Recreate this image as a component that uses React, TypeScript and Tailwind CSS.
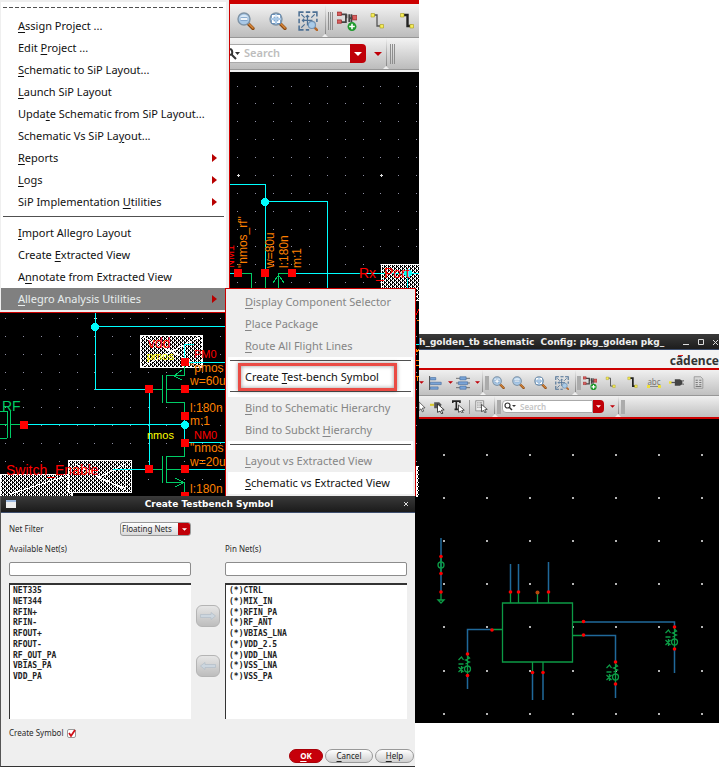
import React from "react";

const UI = "font-['Noto_Sans',sans-serif]";

/* ---------- shared helpers ---------- */

/** Renders a label whose mnemonic letter is marked with "&". */
function Mnemonic({ text }: { text: string }) {
  const i = text.indexOf("&");
  if (i < 0) return <>{text}</>;
  return (
    <span>
      {text.slice(0, i)}
      <span className="underline decoration-1 underline-offset-2">{text[i + 1]}</span>
      {text.slice(i + 2)}
    </span>
  );
}

function Caret({ className }: { className: string }) {
  return (
    <svg viewBox="0 0 8 4" className={className} aria-hidden="true">
      <path d="M0 0H8L4 4Z" fill="currentColor" />
    </svg>
  );
}

/* ---------- toolbar icons (18 x 18 grid) ---------- */

function Lens({ mark }: { mark: string }) {
  return (
    <>
      <path d="M11 11.5L16 16.5" stroke="#8a4a12" strokeWidth="3.2" strokeLinecap="round" />
      <path d="M11.5 11.5L16 16" stroke="#d8863a" strokeWidth="1.6" strokeLinecap="round" />
      <circle cx="7" cy="7" r="6" fill="#a9c8e6" stroke="#7e93a6" strokeWidth="1.4" />
      <path d="M2.6 6A4.6 4.6 0 0 1 11.4 6Q7 4.5 2.6 6Z" fill="#d8e8f6" />
      <path d={mark} stroke="#5c87b4" strokeWidth="3" />
      <path d={mark} stroke="#fff" strokeWidth="1.8" />
    </>
  );
}

const glyphs: Record<string, React.ReactNode> = {
  zoomIn: <Lens mark="M7 3.5V10.5M3.5 7H10.5" />,
  zoomOut: <Lens mark="M3.5 7H10.5" />,
  zoomFit: <Lens mark="M3.8 6V3.800H6M8 3.800H10.200V6M10.200 8V10.200H8M6 10.200H3.800V8" />,
  zoomRegion: (
    <>
      <path d="M1 5V1H5M7 1H11M13 1H17V5M1 7V11M1 13V17H5M7 17H10M17 7V10" stroke="#4d7094" strokeWidth="1.4" />
      <path d="M3 3L6 6M15 3L12 6M3 15L6 12M8.500 4V13M4 8.500H13M7 5.500L8.500 4L10 5.500M5.500 7L4 8.500L5.500 10" stroke="#4d7094" strokeWidth="1.1" />
      <path d="M14.500 14.500L18 18" stroke="#b7682a" strokeWidth="2.2" />
      <circle cx="12.500" cy="12.500" r="3.200" fill="#a9cbe8" stroke="#7393b3" />
    </>
  ),
  instance: (
    <>
      <path d="M3 3H8V10H3M11 3V10M8.500 6.500V3M11 6.500H16M13 3V10" stroke="#444" strokeWidth="1.6" />
      <path d="M0 1H4V4H0ZM0 8H4V11H0ZM14 4H18V8H14Z" fill="#d96060" stroke="#9c2c2c" strokeWidth="0.7" />
      <circle cx="13.500" cy="14" r="4" fill="#1e9a2c" />
      <path d="M13.500 11.500V16.500M11 14H16" stroke="#fff" strokeWidth="1.400" />
    </>
  ),
  wire: (
    <>
      <path d="M5 3H9V14H14" stroke="#555" strokeWidth="1.300" />
      <path d="M3 1.500H6.500V5H3ZM12 12.500H15.500V16H12Z" fill="#f4ec58" stroke="#a89a1c" strokeWidth="0.600" />
    </>
  ),
  wideWire: (
    <>
      <path d="M5 3H9.500V14H14" stroke="#222" strokeWidth="2.400" />
      <path d="M2.500 1.500H6V5H2.500ZM12 12.500H15.500V16H12Z" fill="#f4ec58" stroke="#a89a1c" strokeWidth="0.600" />
    </>
  ),
  pin: (
    <>
      <path d="M2 9H8" stroke="#555" strokeWidth="1.500" />
      <path d="M7 5H13L16 7V11L13 13H7Z" fill="#444" />
      <path d="M16 7H18M16 11H18" stroke="#444" />
      <path d="M0 7.500H3V10.500H0Z" fill="#eedf3e" />
    </>
  ),
  doc: (
    <>
      <path d="M3 1H12L15 4V17H3Z" fill="#d6d6d6" stroke="#888" />
      <path d="M5 6H8M10 6H13M5 9H8M10 9H13M5 12H8M10 12H13M5 14.500H13" stroke="#777" strokeWidth="1.400" />
    </>
  ),
  align: (
    <>
      <path d="M2 0V18" stroke="#555" strokeWidth="1.400" />
      <path d="M3 2H10V5H3ZM3 8H17V11H3ZM3 14H13V17H3Z" fill="#79a4d8" stroke="#466c9c" strokeWidth="0.800" />
    </>
  ),
  distribute: (
    <>
      <path d="M0 3H18M0 9H18M0 15H18" stroke="#555" />
      <path d="M5 1H13V5H5ZM3 7.500H15V11H3ZM5 13H13V17H5Z" fill="#79a4d8" stroke="#466c9c" strokeWidth="0.800" />
    </>
  ),
  pointer: <path d="M6 2L15 11L11 11.500L13 16L11 17L9 12.500L6 15Z" fill="#fff" stroke="#222" />,
  pickPin: (
    <>
      <path d="M0 7H5" stroke="#d8ca2c" strokeWidth="2.500" />
      <path d="M5 4H11L14 7L11 11H5Z" fill="#555" />
      <path d="M9 6L17 13L13.500 13.500L15.500 17L14 18L12 14.500L9 16Z" fill="#fff" stroke="#222" />
    </>
  ),
  pickText: (
    <>
      <path d="M1 4V1.500H11V4M6 1.500V13M3.500 13H8.500" stroke="#222" strokeWidth="2.200" />
      <path d="M9 7L17 14L13.500 14.500L15.500 17.500L14 18L12 15.500L9 17Z" fill="#fff" stroke="#222" />
    </>
  ),
  pickList: (
    <>
      <path d="M1 1H12V15H1Z" fill="#eee" stroke="#777" />
      <path d="M3 4H5M6 4H10M3 7H5M6 7H10M3 10H5M6 10H10" stroke="#777" strokeWidth="1.200" />
      <path d="M9 6L17 13L13.500 13.500L15.500 17L14 18L12 14.500L9 16Z" fill="#fff" stroke="#222" />
    </>
  ),
};

function ToolButton({ icon, label, box, size }: { icon: string; label: string; box: string; size: string }) {
  return (
    <button type="button" aria-label={label} className={`flex shrink-0 items-center justify-center ${box}`}>
      <svg viewBox="0 0 18 18" fill="none" className={size}>
        {glyphs[icon]}
      </svg>
    </button>
  );
}

/** Grip of a tool group, made of three fine bars. */
function Grip({ className }: { className: string }) {
  return (
    <span className={`flex shrink-0 justify-between ${className}`}>
      <span className="w-px bg-[#8e8e8e]" />
      <span className="w-px bg-[#8e8e8e]" />
      <span className="w-px bg-[#8e8e8e]" />
    </span>
  );
}

function Handle({ className }: { className: string }) {
  return <span className={`shrink-0 bg-[#ababab] ${className}`} />;
}

/** Small notch that closes a tool group at the toolbar's lower edge. */
function Notch({ className }: { className: string }) {
  return (
    <span className={`flex shrink-0 flex-col items-center self-stretch ${className}`}>
      <span className="w-px grow bg-linear-to-b from-transparent to-[#8a8a8a]" />
      <svg viewBox="0 0 6 3" className="h-[3px] w-[6px]">
        <path d="M0 3L3 0L6 3Z" fill="#efefef" />
      </svg>
    </span>
  );
}

/* ---------- left schematic ---------- */

const minorX = Array.from({ length: 24 }, (_, i) => Math.round(5 + i * 17.875));
const minorY = Array.from({ length: 24 }, (_, i) => Math.round(85.6 + i * 17.875));
const bigPins = [
  [238, 273], [265, 273], [292, 273], [185, 362], [149, 389], [185, 389], [185, 416],
  [185, 443], [149, 469], [185, 469], [185, 496], [24, 425],
];

function LeftCanvas() {
  return (
    <svg viewBox="0 72 419 425" className="block w-full bg-black font-['Liberation_Sans',sans-serif]" fill="none" shapeRendering="crispEdges">
      <defs>
        <pattern id="dither" width="4" height="4" patternUnits="userSpaceOnUse">
          <rect width="4" height="4" fill="#000" />
          <path d="M0 0h2v1h-2zM2 2h2v1h-2zM1 1h1v1h-1zM3 3h1v1h-1zM3 1h1v1h-1zM1 3h1v1h-1z" fill="#fff" />
        </pattern>
      </defs>
      {minorY.map((y) => minorX.map((x) => <rect key={`${x}-${y}`} x={x} y={y} width="1" height="1" fill="#8f8fa4" />))}
      {[95, 238, 381].map((x) =>
        [175, 318, 461].map((y) => <path key={`${x}-${y}`} d={`M${x - 1} ${y + 0.5}h3M${x + 0.5} ${y - 1}v3`} stroke="#ddd" />)
      )}
      <g fill="url(#dither)" stroke="#fff">
        <rect x="140.500" y="335.500" width="62" height="32" />
        <rect x="0.500" y="474.500" width="72" height="22" />
        <rect x="68.500" y="460.500" width="63" height="32" />
        <rect x="381.500" y="264.500" width="50" height="36" />
        <rect x="416.500" y="466.500" width="10" height="31" />
        <path d="M141 336L202 367M202 336L141 367M10 494L70 475M75 464L125 490M125 464L98 478L125 488V464" />
      </g>
      <g stroke="#00ffff">
        <path d="M230 184.500H265.500V273M265 201.500H327.500V290M230 273.500H238M292 273.500H419M407.500 273V290" />
        <path d="M95.500 313V389.500H149M95 326.500H226M184.500 362V344.500H194M185 362.500H226M185 389.500H226M24 424.500H185" />
        <path d="M149.500 389V469M184.500 416V443M185 442.500H226M113 469.500H149M185 469.500H226M416 344.500H419" />
      </g>
      <g stroke="#00cc66">
        <path d="M238 273.500H251.500V290M265.500 273V290M292 273.500H278.500V290M273 283L278.500 275L284 283" />
        <path d="M149 389.500H162.500M162.500 375V403M166.500 375V403M166 375.500H184.500V366M166 389.500H185M166 402.500H184.500V414M182 370L174 376L182 380" />
        <path d="M149 469.500H162.500M162.500 456V483M166.500 456V483M166 456.500H184.500V446M166 469.500H185M166 482.500H184.500V494M175 478L184 482.500L175 487" />
        <path d="M7.500 411V438M10.500 411V438M0 424.500H7M11 424.500H22M0 411.500H7M0 438.500H7" />
      </g>
      <g fill="#ff0000">
        {bigPins.map(([x, y]) => (
          <rect key={`${x}-${y}`} x={x - 4} y={y - 4} width="8" height="8" />
        ))}
      </g>
      <g fill="#00ffff">
        {[[265, 202], [95, 327], [185, 425], [408, 273]].map(([x, y]) => (
          <circle key={`${x}-${y}`} cx={x} cy={y} r="4" />
        ))}
      </g>
      <g fontSize="14" fill="#ff0000">
        <text x="148" y="348">vdd</text>
        <text x="6" y="475">Switch_Enable</text>
        <text x="359" y="278">Rx_Port</text>
        <text x="2" y="411" fill="#00cc66">RF</text>
      </g>
      <g fontSize="11" fill="#ff0000">
        <text x="194" y="358">PM0</text>
        <text x="194" y="439">NM0</text>
        <text x="147" y="360" fill="#ffff00">pmos</text>
        <text x="147" y="439" fill="#ffff00">nmos</text>
        <text transform="translate(234 268) rotate(-90)">NM1</text>
      </g>
      <g fontSize="12" fill="#ff8000">
        <text x="190" y="372">"pmos</text>
        <text x="190" y="385">w=60u</text>
        <text x="190" y="412">l:180n</text>
        <text x="190" y="425">m:1</text>
        <text x="190" y="452">"nmos</text>
        <text x="190" y="466">w=20u</text>
        <text x="190" y="493">l:180n</text>
        <text transform="translate(247 268) rotate(-90)">"nmos_rf"</text>
        <text transform="translate(274 268) rotate(-90)">w=80u</text>
        <text transform="translate(288 268) rotate(-90)">l:180n</text>
        <text transform="translate(301 268) rotate(-90)">m:1</text>
      </g>
      <path d="M417 320h2M416 349l1 3l2-3M416 360.500h3M416 365.500h3M416 376.500h3M417.500 376v5" stroke="#ff8000" />
      <path d="M416 315L419 309" stroke="#ff0000" />
    </svg>
  );
}

function LeftWindow() {
  return (
    <section aria-label="Schematic editor" className={`absolute left-0 top-0 w-[419px] bg-black ${UI}`}>
      <div className="h-1 bg-[#cc0000]" />
      <div className="flex h-[34px] items-center border-b border-[#979797] bg-linear-to-b from-[#f3f3f3] to-[#bcbcbc] pl-[230px] pt-px">
        <ToolButton icon="zoomOut" label="Zoom out" box="w-8" size="size-[18px]" />
        <ToolButton icon="zoomFit" label="Zoom to fit" box="w-8" size="size-[18px]" />
        <ToolButton icon="zoomRegion" label="Zoom to region" box="w-7" size="size-5" />
        <Notch className="w-[6px]" />
        <Grip className="h-[18px] w-[5px]" />
        <ToolButton icon="instance" label="Create instance" box="w-7" size="size-[20px]" />
        <ToolButton icon="wire" label="Create wire" box="w-8" size="size-[18px]" />
        <ToolButton icon="wideWire" label="Create wide wire" box="w-7" size="size-[18px]" />
      </div>
      <div className="flex h-[32px] items-center border-b border-[#979797] bg-linear-to-b from-[#f3f3f3] to-[#bcbcbc] pl-[230px]">
        <label className="flex h-[19px] w-[120px] items-center gap-1 border-y border-[#aaa] bg-white">
          <svg viewBox="0 0 10 12" className="h-3 w-[10px] shrink-0" fill="none">
            <path d="M0 1Q3 2 2 6L0 7M2 7L6 11" stroke="#333" strokeWidth="2" />
            <path d="M5 4H10L7.500 7Z" fill="#333" />
          </svg>
          <input aria-label="Search" placeholder="Search" className="w-full min-w-0 bg-transparent text-[11px] font-semibold outline-none placeholder:text-[#bdbdbd]" />
        </label>
        <button type="button" aria-label="Search options" className="flex h-[19px] w-4 items-center justify-center rounded-r bg-[#c00008] text-white">
          <Caret className="h-1 w-2" />
        </button>
        <button type="button" aria-label="More" className="ml-2 text-[#c00008]">
          <Caret className="h-1 w-2" />
        </button>
        <Notch className="w-[8px]" />
        <Grip className="h-5 w-[5px]" />
      </div>
      <div className="h-[2px] bg-[#f0f0f0]" />
      <LeftCanvas />
    </section>
  );
}

/* ---------- right schematic ---------- */

const smallPins = [
  [441, 556.5], [441, 573.5], [441, 592], [510.5, 592], [518.5, 592], [548.5, 592], [492, 630],
  [583.5, 621.5], [583.5, 635], [532.5, 672.5], [543, 672.5], [467.5, 654], [467.5, 675.5],
  [615.5, 662], [615.5, 684], [674.5, 627], [674.5, 649],
];
const ports = [[467.5, 669], [615.5, 677], [674.5, 642]];

function RightCanvas() {
  return (
    <svg viewBox="415 419 304 304" className="block w-full bg-black" fill="none">
      {[454, 497, 540, 583, 626, 670, 713].map((y) =>
        [443, 486, 529, 572, 615, 658, 701].map((x) => <rect key={`${x}-${y}`} x={x} y={y} width="2" height="2" fill="#b4b4b4" />)
      )}
      <g stroke="#20699a" strokeWidth="1.500">
        <path d="M441 538V592M510.500 564V592M518.500 564V592M548.500 562V592" />
        <path d="M492 629.500H467.500V654M467.500 676V689M584 622H674.500V627M674.500 649V673M584 635.500H615.500V662M615.500 684V698M532.500 673V700M543 673V700" />
      </g>
      <g stroke="#0c9a45" strokeWidth="1.300">
        <path d="M502.500 603H572.500V662H502.500ZM510.500 592V603M518.500 592V603M537.500 592V603M548.500 592V603M492 629.500H502M573 622H584M573 635.500H584M532.500 662V673M543 662V673" />
        <path d="M441 557V574M441 593V600M438 600H444L441 603Z" />
        <circle cx="441" cy="565" r="3" />
        {ports.map(([x, y]) => (
          <g key={x} transform={`translate(${x} ${y})`}>
            <circle r="3" />
            <path d="M0 -15V8M0 -13L2 -11L-2 -9L2 -7L-2 -5M-9 -9L-6 -12L-4 -9M-9 -5H-4M-9 -2L-4 3M-4 -2L-9 3M-6 -3V4" />
          </g>
        ))}
      </g>
      <g fill="#ff0000">
        {smallPins.map(([x, y], i) => (
          <circle key={i} cx={x} cy={y} r="1.800" />
        ))}
        <circle cx="537.500" cy="592.500" r="2" fill="#b8470c" />
      </g>
    </svg>
  );
}

function RightWindow() {
  return (
    <section aria-label="Golden test bench schematic" className={`absolute left-[415px] right-0 top-[334px] overflow-hidden bg-black ${UI}`}>
      <header className="flex h-4 items-center justify-between border-b border-[#3d4e6e] bg-linear-to-b from-[#3a3a3a] to-[#1d1d1d] pl-1 font-['DejaVu_Sans',sans-serif] font-bold text-[#eee]">
        <h2 className="whitespace-pre text-[9px] leading-4">h_golden_tb schematic  Config: pkg_golden pkg_</h2>
        <svg viewBox="0 0 36 8" className="h-2 w-9 shrink-0" fill="none" stroke="#ddd">
          <path d="M0 6.500H6M15.500 1.500H20.500V6.500H15.500ZM30 2L35 7M35 2L30 7" />
        </svg>
      </header>
      <div className="flex h-5 items-center justify-end border-b-2 border-[#cc0000] bg-[#f3f3f3] pt-[3px] text-[12px] font-bold leading-none text-[#333]">
        <span className="relative">
          cādence
          <span className="absolute left-2 top-0 h-px w-[5px] bg-[#e02020]" />
        </span>
      </div>
      <div className="flex h-[26px] items-center border-b border-[#979797] bg-linear-to-b from-[#f0f0f0] to-[#c0c0c0] pl-1 text-[#c00008]">
        <span className="flex w-[6px]"><Caret className="h-[3px] w-[5px]" /></span>
        <ToolButton icon="align" label="Align" box="w-5" size="size-[14px]" />
        <span className="flex w-[10px] justify-center"><Caret className="h-[3px] w-[5px]" /></span>
        <ToolButton icon="distribute" label="Distribute" box="w-4" size="size-[14px]" />
        <span className="flex w-[9px] justify-end"><Caret className="h-[3px] w-[5px]" /></span>
        <Notch className="w-[5px]" />
        <Handle className="h-[14px] w-1" />
        <ToolButton icon="zoomIn" label="Zoom in" box="w-[18px]" size="size-[13px]" />
        <ToolButton icon="zoomOut" label="Zoom out" box="w-[22px]" size="size-[13px]" />
        <ToolButton icon="zoomFit" label="Zoom to fit" box="w-[22px]" size="size-[13px]" />
        <ToolButton icon="zoomRegion" label="Zoom to region" box="w-[22px]" size="size-[14px]" />
        <Notch className="w-1" />
        <Handle className="h-[14px] w-1" />
        <ToolButton icon="instance" label="Create instance" box="w-[18px]" size="size-[14px]" />
        <ToolButton icon="wire" label="Create wire" box="w-[22px]" size="size-[13px]" />
        <ToolButton icon="wideWire" label="Create wide wire" box="w-[22px]" size="size-[13px]" />
        <button type="button" className="flex w-[22px] flex-col items-center text-[8px] leading-[7px] text-[#777]">
          abc
          <span className="flex w-[14px] items-center">
            <span className="size-[3px] bg-[#eedf3e]" />
            <span className="h-px grow bg-[#888]" />
            <span className="size-[3px] bg-[#eedf3e]" />
          </span>
        </button>
        <ToolButton icon="pin" label="Create pin" box="w-[22px]" size="size-[15px]" />
        <ToolButton icon="doc" label="Properties" box="w-[22px]" size="size-[13px]" />
      </div>
      <div className="flex h-[23px] items-center border-b-2 border-[#cc0000] bg-linear-to-b from-[#f0f0f0] to-[#c0c0c0]">
        <ToolButton icon="pointer" label="Select" box="w-3" size="size-[13px]" />
        <ToolButton icon="pickPin" label="Select pin" box="w-5" size="size-[15px]" />
        <ToolButton icon="pickText" label="Select text" box="w-[22px]" size="size-[13px]" />
        <span className="h-[14px] w-px bg-[#999]" />
        <ToolButton icon="pickList" label="Select list" box="w-[22px]" size="size-[13px]" />
        <Notch className="w-[5px]" />
        <Handle className="h-[14px] w-1" />
        <label className="ml-px flex h-[13px] w-[91px] items-center gap-1 rounded-l border border-[#aaa] bg-white pl-px">
          <svg viewBox="0 0 12 9" className="h-[9px] w-3 shrink-0" fill="none">
            <circle cx="3.500" cy="3.500" r="2.500" stroke="#333" strokeWidth="1.200" />
            <path d="M5 5L8 8" stroke="#333" strokeWidth="1.500" />
            <path d="M8 3H12L10 5Z" fill="#333" />
          </svg>
          <input aria-label="Search" placeholder="Search" className="w-full min-w-0 bg-transparent text-[8px] font-semibold outline-none placeholder:text-[#c4c4c4]" />
        </label>
        <button type="button" aria-label="Search options" className="flex h-[13px] w-[11px] items-center justify-center rounded-r bg-[#c00008] text-white">
          <Caret className="h-[3px] w-[5px]" />
        </button>
        <button type="button" aria-label="More" className="ml-[6px] text-[#c00008]">
          <Caret className="h-[3px] w-[5px]" />
        </button>
        <Notch className="w-[6px]" />
        <Handle className="h-[14px] w-1" />
      </div>
      <RightCanvas />
    </section>
  );
}

/* ---------- menus ---------- */

function MenuItem({ text, sub, active, disabled }: { text: string; sub?: boolean; active?: boolean; disabled?: boolean }) {
  const tone = active ? "bg-[#808080] text-[#e8eeee]" : disabled ? "bg-[#efefef] text-[#858585]" : "bg-white text-[#111]";
  return (
    <button
      type="button"
      role="menuitem"
      disabled={disabled}
      className={`flex h-[22px] w-full items-center justify-between whitespace-nowrap pl-[17px] pr-[9px] text-left text-[11px] ${tone}`}
    >
      <Mnemonic text={text} />
      {sub && (
        <svg viewBox="0 0 5 8" className="h-2 w-[5px]">
          <path d="M0 0L5 4L0 8Z" fill="#b80000" />
        </svg>
      )}
    </button>
  );
}

function MenuRule() {
  return (
    <div role="separator" className="h-[9px] bg-white px-[2px] pt-[3px]">
      <div className="h-px bg-[#505050]" />
    </div>
  );
}

function MainMenu() {
  return (
    <div role="menu" aria-label="SiP" className={`absolute left-0 top-0 w-[230px] border-b border-r border-[#cc0000] bg-[#efefef] pb-[2px] pl-px pr-[3px] pt-[2px] ${UI}`}>
      <div className="h-[13px] bg-white px-[2px] pt-[5px]">
        <div className="h-px bg-[repeating-linear-gradient(90deg,#505050_0_4px,#fff_4px_6px)]" />
      </div>
      <MenuItem text="&Assign Project ..." />
      <MenuItem text="Edit &Project ..." />
      <MenuItem text="&Schematic to SiP Layout..." />
      <MenuItem text="&Launch SiP Layout" />
      <MenuItem text="Upda&te Schematic from SiP Layout..." />
      <MenuItem text="Schematic Vs SiP La&yout..." />
      <MenuItem text="&Reports" sub />
      <MenuItem text="&Logs" sub />
      <MenuItem text="SiP Implementation &Utilities" sub />
      <MenuRule />
      <MenuItem text="&Import Allegro Layout" />
      <MenuItem text="Create &Extracted View" />
      <MenuItem text="A&nnotate from Extracted View" />
      <MenuItem text="&Allegro Analysis Utilities" sub active />
    </div>
  );
}

function SubMenu() {
  return (
    <div role="menu" aria-label="Allegro Analysis Utilities" className={`absolute left-[225px] top-[288px] w-[191px] border-x border-t border-[#cc0000] bg-[#efefef] px-[2px] pb-[2px] pt-[2px] ${UI}`}>
      <MenuItem text="&Display Component Selector" disabled />
      <MenuItem text="&Place Package" disabled />
      <MenuItem text="&Route All Flight Lines" disabled />
      <MenuRule />
      <div className="relative">
        <MenuItem text="Create &Test-bench Symbol" />
        <div className="pointer-events-none absolute -inset-y-[3px] left-[10px] right-4 border-[3px] border-[#ea4b44] shadow-[0_0_4px_#0006,inset_0_0_4px_#0006]" />
      </div>
      <MenuRule />
      <MenuItem text="&Bind to Schematic Hierarchy" disabled />
      <MenuItem text="Bind to Subckt &Hierarchy" disabled />
      <MenuRule />
      <MenuItem text="&Layout vs Extracted View" disabled />
      <MenuItem text="&Schematic vs Extracted View" />
    </div>
  );
}

/* ---------- dialog ---------- */

const available = ["NET335", "NET344", "RFIN+", "RFIN-", "RFOUT+", "RFOUT-", "RF_OUT_PA", "VBIAS_PA", "VDD_PA"];
const pins = ["(*)CTRL", "(*)MIX_IN", "(*)RFIN_PA", "(*)RF_ANT", "(*)VBIAS_LNA", "(*)VDD_2.5", "(*)VDD_LNA", "(*)VSS_LNA", "(*)VSS_PA"];

function NetColumn({ id, title, nets }: { id: string; title: string; nets: string[] }) {
  return (
    <div className="flex min-w-0 flex-1 flex-col">
      <label htmlFor={id} className="h-[18px]">{title}</label>
      <input id={id} className="h-[14px] rounded-[2px] border border-[#8c8c8c] bg-white px-1 outline-none" />
      <div className="mt-[7px] h-[136px] border-l border-t-2 border-[#333] bg-white pl-[3px] pt-px font-['DejaVu_Sans_Mono',monospace] text-[8px] font-bold text-[#222]">
        <ul role="listbox" aria-label={title} className="flex h-[96px] flex-col justify-between">
          {nets.map((n) => (
            <li key={n} role="option" aria-selected="false" className="leading-[10px]">{n}</li>
          ))}
        </ul>
      </div>
    </div>
  );
}

function ArrowButton({ back }: { back?: boolean }) {
  return (
    <button
      type="button"
      aria-label={back ? "Remove net" : "Add net"}
      className="flex h-[22px] w-6 items-center justify-center rounded-[6px] border border-[#b4b4b4] bg-linear-to-b from-[#e6e6e6] to-[#bdbdbd]"
    >
      <svg viewBox="0 0 16 8" className={`h-2 w-4 ${back ? "rotate-180" : ""}`}>
        <path d="M0.500 2.500H11V0.500L15.500 4L11 7.500V5.500H0.500Z" fill="#ccd6df" stroke="#b2bdc7" strokeWidth="0.700" />
      </svg>
    </button>
  );
}

function PillButton({ text, primary, box }: { text: string; primary?: boolean; box: string }) {
  return (
    <button
      type="button"
      className={`flex h-[14px] items-center justify-center rounded-full border leading-none ${box} ${
        primary ? "border-[#a80008] bg-[#c6000a] font-bold text-white" : "border-[#999] bg-linear-to-b from-white to-[#cfcfcf] text-[#222]"
      }`}
    >
      <Mnemonic text={text} />
    </button>
  );
}

function Dialog() {
  return (
    <section role="dialog" aria-label="Create Testbench Symbol" className={`absolute left-0 top-[496px] w-[415px] border-b border-l border-b-[#333] border-l-[#555] bg-[#efefef] text-[8px] leading-[10px] text-[#2a2a2a] ${UI}`}>
      <header className="flex h-[17px] items-center justify-between border-b border-[#3d4e6e] bg-linear-to-b from-[#3a3a3a] to-[#1b1b1b] px-[5px] text-white">
        <span className="h-2 w-[10px] border-t-2 border-[#9db9de] bg-[#eee]" />
        <h2 className="font-['DejaVu_Sans',sans-serif] text-[9px] font-bold leading-4">Create Testbench Symbol</h2>
        <button type="button" aria-label="Close" className="flex size-2 items-center justify-center">
          <svg viewBox="0 0 6 6" className="size-[6px]" stroke="#ddd">
            <path d="M1 1L5 5M5 1L1 5" />
          </svg>
        </button>
      </header>
      <div className="flex flex-col px-2 pt-2">
        <div className="flex h-4 items-center">
          <label htmlFor="filter" className="w-[111px]">Net Filter</label>
          <div className="flex h-[14px] w-[71px] overflow-hidden rounded-[3px] border border-[#999] bg-linear-to-b from-white to-[#d8d8d8]">
            <select id="filter" className="min-w-0 grow appearance-none bg-transparent pl-px leading-3 outline-none">
              <option>Floating Nets</option>
            </select>
            <span className="flex w-3 items-center justify-center bg-[#c00008] text-white">
              <Caret className="h-[3px] w-[5px]" />
            </span>
          </div>
        </div>
        <div className="flex gap-[5px] pt-[7px]">
          <NetColumn id="available" title="Available Net(s)" nets={available} />
          <div className="flex flex-col gap-7 pt-[61px]">
            <ArrowButton />
            <ArrowButton back />
          </div>
          <NetColumn id="pins" title="Pin Net(s)" nets={pins} />
        </div>
        <label className="flex h-7 items-center gap-1">
          Create Symbol
          <span className="relative flex size-[9px]">
            <input type="checkbox" defaultChecked className="size-[9px] appearance-none rounded-[2px] border border-[#999] bg-white" />
            <svg viewBox="0 0 9 9" className="pointer-events-none absolute inset-0" fill="none">
              <path d="M2 4L4 7L8 1" stroke="#d01018" strokeWidth="1.800" />
            </svg>
          </span>
        </label>
      </div>
      <div className="flex justify-end gap-[2px] pb-[3px] pr-px pt-[2px]">
        <PillButton text="&OK" primary box="w-[34px]" />
        <PillButton text="&Cancel" box="w-12" />
        <PillButton text="&Help" box="w-[39px]" />
      </div>
    </section>
  );
}

export default function App() {
  return (
    <main className="relative h-screen w-full overflow-hidden bg-white">
      <RightWindow />
      <LeftWindow />
      <MainMenu />
      <SubMenu />
      <Dialog />
    </main>
  );
}
